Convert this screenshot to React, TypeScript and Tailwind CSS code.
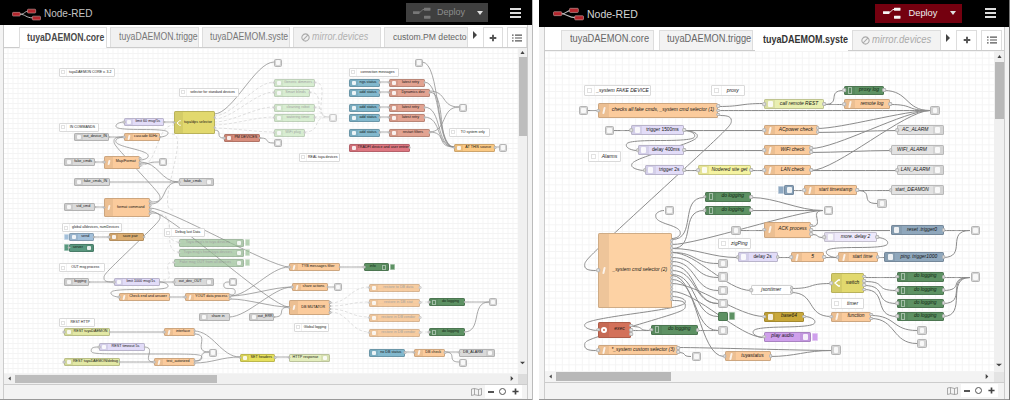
import React from "react";

type Kind = "in" | "out" | "fn" | "comment" | "box" | "plain";
type FlowNode = {
  x: number;
  y: number;
  w: number;
  h: number;
  fill: string;
  label: string;
  kind: Kind;
  dim?: boolean;
  upright?: boolean;
  button?: "l" | "r";
  ports?: number;
};
type Wire = [number, number, number, number];

const C = {
  orange: "#fbcb9c",
  dimOrange: "#f5b87a",
  gray: "#d9d9d9",
  lav: "#e2dcf8",
  yellow: "#e2d96e",
  olive: "#e2e8a4",
  green: "#5d9163",
  red: "#d88d7c",
  salmon: "#e2a391",
  blue: "#82b8cd",
  white: "#ffffff",
};

const n = (
  x: number,
  x2: number,
  y: number,
  h: number,
  fill: string,
  label: string,
  kind: Kind = "fn",
  extra: Partial<FlowNode> = {}
): FlowNode => ({ x, y, w: x2 - x, h, fill, label, kind, ...extra });

const note = (x: number, x2: number, y: number, h: number, label: string) => n(x, x2, y, h, C.white, label, "comment");
const box = (x: number, y: number, s: number, dim = false) => n(x, x + s, y, s, "#e6e6e6", "", "box", { dim });

const coreNodes: FlowNode[] = [
  note(59, 114.5, 68, 8.5, "tuyaDAEMON CORE v. 3.2"),
  note(179, 239, 88, 8.5, "selector for standard devices"),
  note(59, 99, 123, 8.5, "IN COMMANDS"),
  n(124, 164, 118, 8, C.lav, "limit 60 msg/5s"),
  n(174, 214.5, 111, 23, C.yellow, "tuya/dps selector", "fn", { ports: 2 }),
  n(74, 109, 133, 8, C.gray, "out_device_IN", "in"),
  n(124, 160, 133, 8, C.orange, "cascade 60Hz"),
  n(224, 260, 134, 8, C.red, "PM DEVICES"),
  n(64, 95, 158, 8, C.gray, "fake_cmds", "in"),
  n(104, 140, 156, 12.5, C.orange, "Map/Format", "fn", { ports: 3 }),
  box(159, 158, 8),
  n(74, 109.5, 178, 8, C.gray, "fake_cmds_IN", "in"),
  n(179, 214, 178, 8, C.gray, "fake_cmds", "out"),
  n(104, 150, 198, 19, C.orange, "format command", "fn", { ports: 4 }),
  n(64, 95, 203, 8, C.gray, "std_cmd", "in"),
  note(62, 122, 223, 9, "global alldevices, numDevices"),
  n(69, 94, 233, 8, "#a3c0da", "send", "in", { button: "l" }),
  n(109, 144, 233, 8, "#dcae72", "save pair"),
  n(69, 94, 243.5, 8, "#59987f", "server", "out", { button: "l" }),
  note(164, 204.5, 228, 9, "Debug last Data"),
  n(179, 244, 238.5, 8, "#98c095", "Tuya msg's to tuya devices", "out", { dim: true, button: "r" }),
  n(179, 244, 248.5, 8, "#98c095", "Tuya msg's from tuya devices", "out", { dim: true, button: "r" }),
  n(174, 244, 258.5, 8, "#98c095", "Fake msg OUT from all devices", "out", { dim: true, button: "r" }),
  note(59, 104.5, 263, 9, "OUT msg process"),
  n(64, 89, 278, 8, C.gray, "logging", "in"),
  n(114, 160, 278, 8, C.lav, "limit 1000 msg/1s"),
  n(174, 214, 278, 8, C.gray, "out_dev_OUT", "out"),
  box(229, 278, 8),
  n(119, 169.5, 293, 8, C.orange, "Check end and answer"),
  n(185, 230, 293, 8, C.orange, "YOUT data process", "fn", { ports: 2 }),
  n(199, 229.5, 313, 8, C.gray, "share in", "in"),
  n(249, 274, 313, 8, C.gray, "out_ERR", "in"),
  note(59, 94.5, 318, 9, "REST HTTP"),
  n(64, 109.5, 328, 8, C.olive, "REST tuyaDAEMON"),
  n(164, 194.5, 328, 8, C.orange, "interface", "fn", { ports: 2 }),
  n(99, 144.5, 343, 8, C.lav, "REST timeout 5s"),
  box(209, 348.5, 8),
  n(64, 119.5, 358, 8, C.olive, "REST tuyaDAEMON/debug"),
  n(154, 194.5, 358, 8, C.orange, "test_autorized", "fn", { ports: 2 }),
  n(240, 275, 353.5, 8, "#e6e05c", "SET headers"),
  n(289, 329.5, 353.5, 8, "#e4eebd", "HTTP response", "out"),
  n(289, 339.5, 263, 8, C.orange, "TYB messages filter"),
  n(364, 389, 263, 8, C.green, "info", "out", { button: "r" }),
  n(292, 327.5, 283, 8, C.orange, "share actions"),
  box(334, 283, 8),
  n(289, 330, 300, 15, C.orange, "DB MUTATOR", "fn", { ports: 4 }),
  note(294, 329, 323, 8.5, "Global logging"),
  n(369, 420, 283.5, 8, C.dimOrange, "restore to DB data", "fn", { dim: true }),
  n(369, 420, 298.5, 8, C.dimOrange, "restore in DB stat", "fn", { dim: true }),
  n(369, 420, 313.5, 8, C.dimOrange, "restore in DB vendor", "fn", { dim: true }),
  n(369, 420, 328.5, 8, C.dimOrange, "restore in DB vendor", "fn", { dim: true }),
  n(429, 464.5, 298, 8, C.green, "do logging"),
  n(429, 464.5, 328, 8, C.green, "do logging"),
  box(489, 298, 8),
  n(369, 405, 348.5, 8, C.blue, "no DB status", "in"),
  n(414, 445, 348.5, 8, C.orange, "DB check"),
  n(459, 494.5, 348.5, 8, C.gray, "DB_ALARM", "out"),
  box(459, 358.5, 8),
  box(274, 58.5, 8),
  n(274, 314.5, 78.5, 8, "#c9e8c0", "Generic dimmers", "fn", { dim: true }),
  n(274, 309.5, 88.5, 8, "#c9e8c0", "Smart blinds", "fn", { dim: true }),
  n(274, 314.5, 103.5, 8, "#c9e8c0", "cleaning robot", "fn", { dim: true }),
  n(274, 314.5, 113.5, 8, "#c9e8c0", "watering timer", "fn", { dim: true }),
  n(274, 304.5, 128.5, 8, "#c9e8c0", "WiFi plug", "fn", { dim: true }),
  box(329, 113.5, 8, true),
  box(274, 139, 8),
  note(349, 399, 68, 8.5, "connection messages"),
  box(414.5, 58.5, 8),
  ...[78, 88, 103, 113, 128].map((y, i) => n(349, 379.5, y + 0.5, 8, C.blue, i ? "add status" : "ngs status", "in")),
  n(389, 424.5, 78.5, 8, C.salmon, "latest retry"),
  n(389, 429.5, 88.5, 8, C.salmon, "Dynamics dev"),
  n(389, 424.5, 103.5, 8, C.salmon, "latest retry"),
  n(389, 424.5, 113.5, 8, C.salmon, "latest retry"),
  n(389, 429.5, 128.5, 8, C.salmon, "restart filters"),
  box(459, 103.5, 8),
  note(449, 489.5, 128, 8.5, "TO system only"),
  n(454, 495, 143.5, 8, "#fbc983", "AT THIS source"),
  box(499, 143.5, 8),
  n(349, 409.5, 143.5, 8, "#dd7680", "TRADFI device and user entries", "in"),
  note(299, 339.5, 153, 8.5, "REAL tuya devices"),
];

const coreWires: Wire[] = [
  [214, 114, 274, 62], [164, 122, 174, 122], [214, 130, 224, 138], [260, 138, 274, 143],
  [160, 137, 124, 122], [109, 137, 124, 137], [140, 160, 124, 137], [150, 202, 124, 137],
  [95, 162, 104, 162], [140, 164, 159, 162], [140, 162, 179, 182], [110, 182, 179, 182],
  [150, 204, 179, 182], [95, 207, 104, 207], [150, 208, 289, 267], [150, 211, 289, 307],
  [150, 213, 114, 282], [94, 237, 109, 237], [89, 282, 114, 282], [160, 282, 174, 282],
  [160, 282, 119, 297], [169, 297, 185, 297], [230, 295, 229, 282], [230, 296, 289, 267],
  [230, 296, 292, 287], [230, 299, 289, 307], [229, 317, 292, 287], [274, 317, 289, 307],
  [339, 267, 364, 267], [327, 287, 334, 287], [464, 302, 489, 302], [464, 332, 489, 302],
  [405, 352, 414, 352], [445, 352, 459, 352], [445, 352, 459, 362], [109, 332, 164, 332],
  [194, 331, 240, 357], [194, 334, 209, 352], [144, 347, 154, 362], [119, 362, 154, 362],
  [194, 361, 209, 352], [194, 363, 240, 357], [194, 361, 99, 347], [275, 357, 289, 357],
  [379, 82, 389, 82], [379, 92, 389, 92], [379, 107, 389, 107], [379, 117, 389, 117], [379, 132, 389, 132],
  [422, 62, 454, 147], [424, 82, 454, 147], [429, 91, 459, 107], [429, 92, 454, 147],
  [424, 107, 454, 147], [424, 117, 454, 147], [429, 132, 454, 147], [429, 132, 459, 107], [495, 147, 499, 147],
];

const coreFaint: Wire[] = [
  [214, 116, 274, 82], [214, 119, 274, 92], [214, 122, 274, 107], [214, 125, 274, 117], [214, 128, 274, 132],
  [314, 82, 329, 117], [309, 92, 329, 117], [314, 107, 329, 117], [314, 117, 329, 117], [304, 132, 329, 117],
  [330, 303, 369, 287], [330, 306, 369, 302], [330, 309, 369, 317], [330, 312, 369, 332],
  [420, 302, 429, 302], [420, 332, 429, 332], [160, 215, 179, 242], [160, 215, 179, 252], [163, 280, 174, 262],
  [140, 166, 174, 125], [172, 134, 173, 210],
];

const lg = (x: number, y: number) => n(x, x + 46.5, y, 9.5, C.green, "do logging");

const systemNodes: FlowNode[] = [
  note(584, 651, 85, 10.5, "_system FAKE DEVICE"),
  note(711, 744.5, 85, 10.5, "proxy"),
  box(578.5, 105.5, 9.5),
  n(598, 718, 103, 15, C.orange, "checks all fake cmds, _system cmd selector (1)", "fn", { ports: 3 }),
  n(844, 884, 85.5, 9.5, C.green, "proxy log"),
  n(764, 824, 99, 10, "#e9efb0", "call remote REST"),
  n(844, 890, 99, 10, C.orange, "remote log"),
  box(930, 105.5, 9.5),
  box(604.5, 125.5, 9.5),
  n(631, 684, 125, 10, C.lav, "trigger 1500ms", "fn", { upright: true }),
  n(637.5, 684, 145, 10, C.lav, "delay 400ms", "fn", { upright: true }),
  note(588, 621, 151, 11, "Alarms"),
  n(644.5, 684, 165, 10, C.lav, "trigger 2s", "fn", { upright: true }),
  n(698, 751, 165, 10, "#f5f3a0", "Nodered site get"),
  n(764, 817.5, 125, 10, C.orange, "ACpower check", "fn", { ports: 2 }),
  n(764, 811, 145, 10, C.orange, "WiFi check", "fn", { ports: 2 }),
  n(764, 811, 165, 10, C.orange, "LAN check"),
  n(897, 943.5, 125, 10, "#e2e2e2", "AC_ALARM", "out"),
  n(890.5, 943.5, 145, 10, "#e2e2e2", "WIFI_ALARM", "out"),
  n(897, 943.5, 165, 10, "#e2e2e2", "LAN_ALARM", "out"),
  n(783.5, 793.5, 185, 10, "#8fa9c2", "", "in", { button: "l" }),
  n(804, 857, 185, 10, C.orange, "start timestamp"),
  n(890.5, 943.5, 185, 10, "#e2e2e2", "start_DEAMON", "out"),
  box(877, 198.5, 9.5),
  lg(704.5, 192),
  lg(704.5, 205.5),
  box(664.5, 205.5, 9.5),
  box(731, 225.5, 9.5),
  n(764, 811, 222, 15.5, C.orange, "ACK process", "fn", { ports: 3 }),
  note(717.5, 751, 238, 10.5, "zigPing"),
  box(823.5, 205.5, 9.5),
  n(824, 877, 232, 10, "#eee9fb", "more. delay 2"),
  n(890.5, 943.5, 225, 10, "#8fa7bc", "reset .trigger0", "in"),
  box(970.5, 225.5, 9.5),
  n(737.5, 777.5, 252, 10, C.lav, "delay 2s", "fn", { upright: true }),
  n(791, 824, 252, 10, C.orange, "5"),
  n(837.5, 877.5, 252, 10, C.orange, "start time"),
  n(884, 943.5, 252, 10, "#8fa7bc", "ping. trigger1000", "in"),
  n(598, 671.5, 232.5, 75, "#fdd2a4", "_system cmd selector (2)", "fn", { ports: 17 }),
  box(718, 258.5, 9.5),
  box(718, 272, 9.5),
  box(718, 285.5, 9.5),
  box(718, 298.5, 9.5),
  n(718, 727.5, 311.5, 9.5, C.green, "", "plain", { button: "r" }),
  box(718, 325.5, 9.5),
  n(598, 631, 322, 15.5, "#d3715a", "exec", "fn", { ports: 3 }),
  lg(651, 325),
  n(598, 678, 345, 10, C.orange, "*_system custom selector (3)", "fn", { ports: 2 }),
  box(691.5, 351.5, 9.5),
  n(724.5, 770.5, 351, 10, C.orange, "tuyastatus"),
  n(751, 791.5, 285, 10, C.white, "jsontimer", "plain", { ports: 2 }),
  n(831, 864, 273, 20, C.yellow, "switch", "fn", { ports: 4 }),
  note(831, 864, 298, 10.5, "timer"),
  n(831, 871, 311.5, 10, C.orange, "function", "fn", { ports: 2 }),
  lg(897, 272),
  lg(897, 285.5),
  lg(897, 298.5),
  lg(897, 311.5),
  box(970.5, 272, 9.5),
  box(917, 325.5, 9.5),
  box(917, 338.5, 9.5),
  n(764, 804, 311.5, 10, "#c9a83a", "base64"),
  n(764, 811, 331.5, 10, "#cfa0ec", "play audio", "out", { button: "r" }),
  box(831, 345, 9.5),
];

const systemWires: Wire[] = [
  [588, 110, 598, 110], [718, 106, 764, 103], [718, 110, 930, 110], [718, 115, 598, 270],
  [824, 104, 844, 90], [824, 104, 844, 104], [884, 90, 930, 110], [890, 104, 930, 110],
  [614, 130, 631, 130], [684, 130, 764, 130], [684, 130, 637, 150], [684, 130, 645, 170],
  [684, 150, 764, 150], [684, 170, 698, 170], [751, 170, 764, 170],
  [817, 128, 930, 110], [817, 132, 897, 130], [811, 148, 930, 110], [811, 152, 890, 150],
  [811, 170, 930, 110], [811, 170, 897, 170], [793, 190, 804, 190], [857, 190, 890, 190], [857, 190, 877, 203],
  [751, 197, 823, 210], [751, 210, 823, 210], [811, 226, 823, 210], [672, 238, 664, 210],
  [672, 239, 704, 197], [672, 248, 704, 210], [672, 244, 823, 210], [741, 230, 764, 230],
  [811, 230, 890, 230], [811, 234, 824, 237], [877, 237, 837, 257], [943, 230, 970, 230], [943, 257, 970, 230],
  [777, 257, 791, 257], [824, 257, 837, 257], [877, 257, 884, 257],
  [672, 248, 737, 257], [672, 252, 718, 263], [672, 252, 751, 290], [672, 257, 718, 277],
  [672, 261, 718, 290], [672, 265, 718, 303], [672, 274, 718, 316],
  [672, 283, 764, 316], [672, 270, 718, 303], [672, 279, 718, 330], [672, 291, 764, 337], [672, 275, 724, 356],
  [672, 296, 598, 330], [672, 300, 598, 350], [631, 326, 651, 330], [631, 330, 651, 330], [698, 330, 718, 330],
  [678, 347, 831, 350], [678, 352, 691, 356], [770, 356, 831, 350],
  [791, 288, 831, 283], [791, 292, 831, 316], [864, 277, 897, 277], [864, 281, 897, 290],
  [864, 285, 897, 303], [864, 289, 897, 316], [943, 277, 970, 277], [943, 290, 970, 277],
  [943, 303, 970, 277], [943, 316, 970, 277], [871, 315, 917, 330], [871, 318, 917, 343], [804, 316, 764, 337],
];

/* Forward links are a single bezier, backward links fold around both nodes. */
function wirePath([ox, oy, tx, ty]: Wire, s: number): string {
  const nw = 100 * s;
  const nh = 30 * s;
  const dx = tx - ox;
  const dy = ty - oy;
  const delta = Math.hypot(dx, dy);
  if (dx > 0) {
    const k = delta < nw ? 0.75 * delta : 0.75 * nw;
    return `M${ox} ${oy}C${ox + k} ${oy} ${tx - k} ${ty} ${tx} ${ty}`;
  }
  const scale = 0.4 - 0.2 * Math.max(0, (nw - Math.min(Math.abs(dx), Math.abs(dy))) / nw);
  const midX = tx - dx / 2;
  const midY = dy === 0 ? ty + nh : ty - dy / 2;
  const cp = nh / 2;
  const y1 = (ty + midY) / 2;
  const down = dy > 0;
  const topX = ox + nw * scale;
  const topY = down ? Math.min(y1 - dy / 2, oy + cp) : Math.max(y1 - dy / 2, oy - cp);
  const botX = tx - nw * scale;
  const botY = down ? Math.max(y1, ty - cp) : Math.min(y1, ty + cp);
  const x1 = (ox + topX) / 2;
  const sc = down ? 1 : -1;
  const p: number[][] = [
    [x1, oy],
    [topX, down ? Math.max(oy, topY - cp) : Math.min(oy, topY + cp)],
    [x1, down ? Math.min(midY, topY + cp) : Math.max(midY, topY - cp)],
    [botX, down ? Math.max(midY, botY - cp) : Math.min(midY, botY + cp)],
    [(tx + botX) / 2, ty],
  ];
  if (p[2][1] === topY + sc * cp) {
    if (Math.abs(dy) < cp * 10) {
      p[1][1] = topY - (sc * cp) / 2;
      p[3][1] = botY - (sc * cp) / 2;
    }
    p[2][0] = topX;
  }
  return `M${ox} ${oy}C${p[0]} ${p[1]} ${topX} ${topY}S${p[2]} ${midX} ${midY}S${p[3]} ${botX} ${botY}S${p[4]} ${tx} ${ty}`;
}

function NodeBox({ node, ox, oy, large }: { node: FlowNode; ox: number; oy: number; large: boolean }) {
  const { x, y, w, h, kind } = node;
  const pos: React.CSSProperties = { left: x - ox, top: y - oy, width: w, height: h };
  const iconW = large ? "w-[10px]" : "w-[7.5px]";
  const font = large ? "text-[4.9px]" : "text-[3.7px]";
  if (kind === "box") {
    return (
      <div className={`absolute flex items-center justify-center rounded-[1.5px] border border-[#b4b4b4] bg-[#d4d4d4] ${node.dim ? "opacity-70" : ""}`} style={pos}>
        <div className={`rounded-[1px] bg-[#f8f8f8] ${large ? "h-[5.5px] w-[4.5px]" : "h-[4.5px] w-[4px]"}`} />
      </div>
    );
  }
  if (kind === "comment") {
    return (
      <div className={`absolute flex items-center rounded-[1px] border border-[#dadada] bg-white whitespace-nowrap text-[#222] ${large ? "text-[5px] italic" : "text-[3.5px]"}`} style={pos}>
        <div className={`flex h-full shrink-0 items-center justify-center border-r border-[#f2f2f2] ${large ? "w-[10px]" : "w-[7px]"}`}>
          <div className={`border-[0.5px] border-[#e2e2e2] ${large ? "size-[5px]" : "size-[4px]"}`} />
        </div>
        <div className="flex-1 text-center">{node.label}</div>
      </div>
    );
  }
  const ports = node.ports ?? 1;
  const iconRight = kind === "out";
  const dot = large ? "size-[3.6px]" : "size-[2.8px]";
  const slash = node.fill === C.orange || node.fill === "#fdd2a4";
  let glyph = <div className={`rounded-[1px] bg-white/85 ${large ? "h-[6px] w-[5px]" : "size-[4px]"}`} />;
  if (slash) glyph = <div className={`skew-x-[-12deg] rounded-[1px] bg-white/80 ${large ? "h-[7px] w-[2px]" : "h-[5px] w-[1.5px]"}`} />;
  if (node.fill === C.yellow)
    glyph = (
      <svg viewBox="0 0 6 8" className={large ? "h-[8px] w-[6px]" : "h-[6px] w-[5px]"}>
        <path d="M6 1H4.500L1 4L4.500 7H6" fill="none" stroke="#fff" strokeWidth="1.300" />
      </svg>
    );
  if (node.label === "exec") glyph = <div className="size-[6px] rounded-full border-2 border-white" />;
  if (node.fill === C.green) glyph = <div className={`border border-white/45 ${large ? "h-[7px] w-[4px]" : "h-[5px] w-[4px]"}`} />;
  const icon = <div className={`flex h-full shrink-0 items-center justify-center bg-black/6 ${iconW}`}>{glyph}</div>;
  return (
    <div className={`absolute ${node.dim ? "opacity-70" : ""}`} style={pos}>
      {node.button && (
        <div
          className={`absolute top-[10%] h-[80%] rounded-[1px] border border-white/40 ${large ? "w-[6px]" : "w-[5px]"} ${node.button === "l" ? "right-full" : "left-full ml-px"}`}
          style={{ background: node.fill }}
        />
      )}
      <div
        className={`flex size-full items-center overflow-hidden rounded-[1.5px] border border-black/18 whitespace-nowrap ${font} ${large && !node.upright ? "italic" : ""} ${node.dim ? "text-[#777]" : node.fill === C.green ? "text-[#0d2410]" : "text-[#151515]"}`}
        style={{ background: node.fill }}
      >
        {!iconRight && kind !== "plain" && icon}
        <div className="flex-1 text-center">{node.label}</div>
        {iconRight && icon}
      </div>
      {kind !== "in" && w > 12 && (
        <div className={`absolute top-1/2 -translate-1/2 rounded-[1px] border-[0.5px] border-[#b4b4b4] bg-[#e2e2e2] ${dot}`} />
      )}
      {!iconRight && w > 12 && (
        <div className="absolute inset-y-[8%] left-full flex -translate-x-1/2 flex-col items-center justify-around">
          {Array.from({ length: ports }, (_, i) => (
            <div key={i} className={`rounded-[1px] border-[0.5px] border-[#b4b4b4] bg-[#e2e2e2] ${dot}`} />
          ))}
        </div>
      )}
    </div>
  );
}

function Canvas(props: { id: string; nodes: FlowNode[]; wires: Wire[]; faint?: Wire[]; ox: number; oy: number; w: number; h: number; s: number }) {
  const { id, nodes, wires, faint = [], ox, oy, w, h, s } = props;
  const step = 20 * s;
  return (
    <div className="relative min-w-0 flex-1 overflow-hidden bg-white">
      <svg className="absolute inset-0" width={w} height={h} viewBox={`${ox} ${oy} ${w} ${h}`}>
        <defs>
          <pattern id={id} x={ox + 3.5} y={oy} width={step} height={step} patternUnits="userSpaceOnUse">
            <path d={`M0 .5H${step}M.5 0V${step}`} stroke="#f4f4f4" strokeWidth="1" fill="none" />
          </pattern>
        </defs>
        <rect x={ox} y={oy} width={w} height={h} fill={`url(#${id})`} />
        <g fill="none" stroke="#d2d2d2" strokeWidth=".7" strokeDasharray="3 2">
          {faint.map((l, i) => <path key={i} d={wirePath(l, s)} />)}
        </g>
        <g fill="none" stroke="#8c8c8c" strokeWidth={s * 3}>
          {wires.map((l, i) => <path key={i} d={wirePath(l, s)} />)}
        </g>
      </svg>
      {nodes.map((node, i) => <NodeBox key={i} node={node} ox={ox} oy={oy} large={s > 0.3} />)}
    </div>
  );
}

function Logo({ className }: { className: string }) {
  return (
    <svg viewBox="0 0 30 13" className={className}>
      <path d="M8 6.200C14 6.200 12 3 18 3M8 6.200C14 6.200 14 10 22 10" fill="none" stroke="#bbb" strokeWidth="1" />
      <g fill="#b3262d" stroke="#c9a0a0" strokeWidth=".6">
        <rect x=".5" y="4.300" width="8" height="3.800" rx=".8" />
        <rect x="16" y="1" width="8.500" height="4" rx=".8" />
        <rect x="21" y="8.200" width="8.500" height="4" rx=".8" />
      </g>
    </svg>
  );
}

function DeployIcon({ color }: { color: string }) {
  return (
    <svg viewBox="0 0 18 12" className="h-[12px] w-[18px]">
      <path d="M5 5.500C9 5.500 8 2.200 12 2.200" fill="none" stroke={color} strokeWidth="1" />
      <g fill={color}>
        <rect x="0" y="4.200" width="6.500" height="2.800" rx=".4" />
        <rect x="11" y=".7" width="6.500" height="3" rx=".4" />
        <rect x="11" y="8.700" width="6.500" height="3" rx=".4" />
      </g>
    </svg>
  );
}

const Bars = () => (
  <div className="flex w-[11px] flex-col gap-[2px]">
    <div className="h-[2px] bg-[#ddd]" />
    <div className="h-[2px] bg-[#ddd]" />
    <div className="h-[2px] bg-[#ddd]" />
  </div>
);

const Ban = () => (
  <svg viewBox="0 0 10 10" className="mr-[2px] size-[9px] shrink-0">
    <path d="M5 1a4 4 0 1 0 .01 0M2.200 7.800L7.800 2.200" fill="none" stroke="#aaa" strokeWidth="1.200" />
  </svg>
);

const Plus = () => (
  <svg viewBox="0 0 8 8" className="size-[8px]">
    <path d="M4 .7V7.300M.7 4H7.300" stroke="#555" strokeWidth="1.900" />
  </svg>
);

const ListIcon = () => (
  <svg viewBox="0 0 10 8" className="h-[8px] w-[10px]">
    <path d="M0 1.200H1.600M0 4H1.600M0 6.800H1.600M3 1.200H10M3 4H10M3 6.800H10" stroke="#555" strokeWidth="1.200" />
  </svg>
);

const Arrow = ({ className, d }: { className: string; d: string }) => (
  <svg viewBox="0 0 6 6" preserveAspectRatio="none" className={className}>
    <path d={d} fill="#444" />
  </svg>
);

const Caret = ({ className }: { className: string }) => (
  <svg viewBox="0 0 6 4" className={className}>
    <path d="M0 0H6L3 4Z" fill="#e0e0e0" />
  </svg>
);

function FooterTools() {
  return (
    <>
      <svg viewBox="0 0 11 8" className="h-[8px] w-[11px]">
        <path d="M.5 1L3.500 .5L7.500 1.500L10.500 .5V7L7.500 7.500L3.500 6.700L.5 7.500ZM3.500 .5V6.700M7.500 1.500V7.500" fill="none" stroke="#888" strokeWidth=".7" />
      </svg>
      <div className="ml-[3px] flex h-[13px] w-[37px] items-center justify-around bg-white">
        <div className="h-[2px] w-[6px] bg-[#555]" />
        <div className="size-[7px] rounded-full border border-[#555]" />
        <svg viewBox="0 0 8 8" className="size-[7px]">
          <path d="M4 .5V7.500M.5 4H7.500" stroke="#444" strokeWidth="1.900" />
        </svg>
      </div>
    </>
  );
}

const UP = "M3 1.200L5.500 4.800H.5Z";
const DOWN = "M0 1H6L3 5Z";
const LEFT = "M4.500 .5V5.500L1.500 3Z";
const RIGHT = "M1 0L5 3L1 6Z";

function CoreEditor() {
  return (
    <section className="flex h-[399.5px] w-[532px] shrink-0 flex-col border-b border-[#999]">
      <header className="flex h-[25px] shrink-0 items-center bg-black pl-[12px]">
        <Logo className="mt-[3px] h-[13px] w-[29px]" />
        <span className="mt-[2px] ml-[3px] w-[362px] text-[10px] text-[#c4c4c4]">Node-RED</span>
        <div className="flex h-[19px] w-[82px] items-center bg-[#3f3f3f] pl-[7px]">
          <DeployIcon color="#777" />
          <span className="ml-[6px] text-[9px] text-[#8e8e8e]">Deploy</span>
          <Caret className="ml-[12px] h-[4px] w-[6px]" />
        </div>
        <div className="ml-[22px]"><Bars /></div>
      </header>
      <div className="flex min-h-0 flex-1 bg-[#f3f3f3]">
        <div className="w-[4px] shrink-0 border-r border-[#ccc]" />
        <div className="flex w-[524px] flex-col border-r border-[#ccc]">
          <div className="flex h-[23px] shrink-0 items-stretch border-b border-[#ccc] bg-white pt-[2px] text-[8.7px] whitespace-nowrap text-[#777]">
            <div className="w-[15px]" />
            <div className="-mb-px flex w-[88px] items-center overflow-hidden border-x border-t border-[#ddd] bg-white pl-[7px] font-bold text-[#4a4a4a]"><span className="scale-y-115">tuyaDAEMON.core</span></div>
            <div className="ml-[3px] flex w-[89px] items-center border border-b-0 border-[#ddd] bg-[#f1f1f1] pl-[8px]"><span className="scale-y-115">tuyaDAEMON.trigge</span></div>
            <div className="ml-[3px] flex w-[88px] items-center border border-b-0 border-[#ddd] bg-[#f1f1f1] pl-[7px]"><span className="scale-y-115">tuyaDAEMOM.syste</span></div>
            <div className="ml-[3px] flex w-[88px] items-center border border-b-0 border-[#ddd] bg-[#f1f1f1] pl-[7px] text-[9px] text-[#b0b0b0] italic"><Ban /><span className="scale-y-115">mirror.devices</span></div>
            <div className="ml-[3px] flex w-[84px] items-center border border-b-0 border-[#ddd] bg-[#f1f1f1] pl-[8px] text-[8.600px] text-[#666]"><span className="scale-y-115">custom.PM detecto</span></div>
            <div className="flex w-[15px] items-start bg-white pt-[4px] pl-[4px]"><Arrow className="h-[8px] w-[6px]" d={RIGHT} /></div>
            <div className="flex w-[20px] items-center justify-center border border-b-0 border-[#ddd]"><Plus /></div>
            <div className="ml-[4px] flex w-[20px] items-center justify-center border border-b-0 border-[#ddd]"><ListIcon /></div>
          </div>
          <div className="flex min-h-0 flex-1">
            <Canvas id="gridCore" nodes={coreNodes} wires={coreWires} faint={coreFaint} ox={4} oy={48} w={515} h={326} s={0.25} />
            <div className="flex w-[9px] shrink-0 flex-col items-center bg-[#f0f0f0]">
              <Arrow className="my-[2px] h-[5px] w-[5px]" d={UP} />
              <div className="h-[79px] w-[8px] bg-[#bdbdbd]" />
              <div className="flex-1" />
              <Arrow className="mb-[9px] h-[4px] w-[5px]" d={DOWN} />
            </div>
          </div>
          <div className="flex h-[10px] shrink-0 items-center bg-[#f0f0f0]">
            <Arrow className="mx-[3px] size-[5px]" d={LEFT} />
            <div className="h-[8px] w-[202px] bg-[#bdbdbd]" />
            <div className="flex-1" />
            <Arrow className="mr-[4px] h-[5px] w-[4px]" d={RIGHT} />
            <div className="h-full w-[9px] bg-[#dcdcdc]" />
          </div>
          <footer className="flex h-[15px] shrink-0 items-center justify-end border-t border-[#ccc] pr-[5px]"><FooterTools /></footer>
        </div>
      </div>
    </section>
  );
}

function SystemEditor() {
  return (
    <section className="flex h-[399.5px] w-[470px] shrink-0 flex-col border-b border-[#999]">
      <header className="flex h-[26.5px] shrink-0 items-center bg-black pl-[14px]">
        <Logo className="mt-[2px] h-[14px] w-[31px]" />
        <span className="mt-[2px] ml-[3px] w-[288px] text-[10.5px] text-[#d4d4d4]">Node-RED</span>
        <div className="flex h-[19px] w-[87px] items-center bg-[#74000f] pl-[7.500px]">
          <DeployIcon color="#f5f5f5" />
          <span className="ml-[8px] text-[9.3px] text-[#eee]">Deploy</span>
          <Caret className="ml-[13px] h-[4px] w-[6px]" />
        </div>
        <div className="ml-[23px]"><Bars /></div>
      </header>
      <div className="flex min-h-0 flex-1 bg-[#f3f3f3]">
        <div className="w-[6px] shrink-0 border-r border-[#ccc]" />
        <div className="flex w-[460px] flex-col border-r border-[#ccc]">
          <div className="flex h-[24px] shrink-0 items-stretch border-b border-[#ccc] bg-white pt-[3px] text-[9.3px] whitespace-nowrap text-[#666]">
            <div className="w-[16px]" />
            <div className="flex w-[93px] items-center border border-b-0 border-[#ddd] bg-[#f3f3f3] pl-[8px]"><span className="scale-y-112">tuyaDAEMON.core</span></div>
            <div className="ml-[5px] flex w-[94px] items-center border border-b-0 border-[#ddd] bg-[#f3f3f3] pl-[7px]"><span className="scale-y-112">tuyaDAEMON.trigge</span></div>
            <div className="-mb-px ml-[2px] flex w-[93px] items-center bg-white pl-[8px] text-[9px] font-bold text-[#333]"><span className="scale-y-112">tuyaDAEMOM.syste</span></div>
            <div className="ml-[4px] flex w-[89px] items-center border border-b-0 border-[#ddd] bg-[#f3f3f3] pl-[8px] text-[9.500px] text-[#aaa] italic"><Ban /><span className="scale-y-112">mirror.devices</span></div>
            <div className="flex w-[15px] items-start pt-[4px] pl-[4px]"><Arrow className="h-[8px] w-[6px]" d={RIGHT} /></div>
            <div className="flex w-[21px] items-center justify-center border border-b-0 border-[#ddd]"><Plus /></div>
            <div className="ml-[4px] flex w-[21px] items-center justify-center border border-b-0 border-[#ddd]"><ListIcon /></div>
          </div>
          <div className="flex min-h-0 flex-1">
            <Canvas id="gridSystem" nodes={systemNodes} wires={systemWires} ox={545} oy={50.5} w={449} h={322} s={1 / 3} />
            <div className="flex w-[10px] shrink-0 flex-col items-center bg-[#f0f0f0]">
              <Arrow className="my-[3px] size-[5px]" d={UP} />
              <div className="h-[57px] w-[9px] bg-[#b8b8b8]" />
              <div className="flex-1" />
              <Arrow className="mb-[5px] h-[4px] w-[6px]" d={DOWN} />
            </div>
          </div>
          <div className="flex h-[10px] shrink-0 items-center bg-[#f3f3f3]">
            <Arrow className="mx-[3px] size-[5px]" d={LEFT} />
            <div className="h-[9px] w-[115px] bg-[#b8b8b8]" />
            <div className="flex-1" />
            <Arrow className="mr-[5px] h-[5px] w-[4px]" d={RIGHT} />
            <div className="h-full w-[10px] bg-[#e4e4e4]" />
          </div>
          <footer className="flex h-[17px] shrink-0 items-center justify-end border-t border-[#ccc] pr-[6px]"><FooterTools /></footer>
        </div>
      </div>
    </section>
  );
}

export default function App() {
  return (
    <main className="flex h-[400px] w-[1010px] overflow-hidden bg-white font-['Liberation_Sans',Arial,sans-serif] leading-none">
      <CoreEditor />
      <div className="w-[7px] shrink-0 border-l border-[#bbb]" />
      <SystemEditor />
      <div className="w-px shrink-0 bg-[#777]" />
    </main>
  );
}
